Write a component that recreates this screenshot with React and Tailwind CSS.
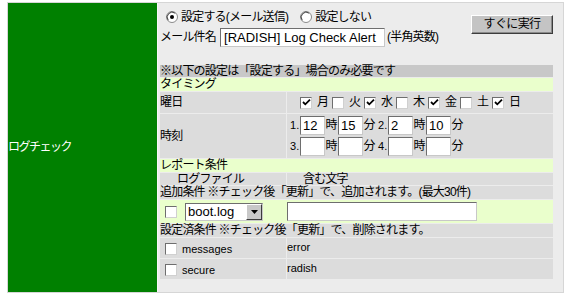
import React from "react";

const FONT = "font-[family-name:'Liberation_Sans','Noto_Sans_CJK_JP',sans-serif]";

function Radio({ on }) {
  return (
    <svg width="12" height="12" viewBox="0 0 12 12" className="shrink-0">
      <circle cx="6" cy="6" r="5.5" fill="#fff" stroke="#8a8a8a" />
      <path d="M2.2 9.2 A5 5 0 0 1 9.2 2.2" fill="none" stroke="#404040" strokeWidth="1" />
      {on && <circle cx="6" cy="6" r="2" fill="#000" />}
    </svg>
  );
}

function Check({ on }) {
  return (
    <span className="flex h-[12px] w-[12px] shrink-0 items-center justify-center border border-t-[#6e6e6e] border-l-[#6e6e6e] border-b-[#d0d0d0] border-r-[#d0d0d0] bg-white">
      {on && (
        <svg width="9" height="9" viewBox="0 0 9 9">
          <path d="M1 4 L3.3 6.3 L8 1.6" fill="none" stroke="#000" strokeWidth="1.8" />
        </svg>
      )}
    </span>
  );
}

function Box({ w, value }) {
  return (
    <span
      className={`flex h-[19px] ${w} shrink-0 items-center border border-t-[#6e6e6e] border-l-[#6e6e6e] border-b-[#c8c8c8] border-r-[#c8c8c8] bg-white pl-[2px] text-[13px]`}
    >
      {value}
    </span>
  );
}

function TimeSet({ n, h, m }) {
  return (
    <div className="flex items-center">
      <span className="w-[10px] text-[11px]">{n}.</span>
      <Box w="w-[25px]" value={h} />
      <span className="w-[13px] text-center">時</span>
      <Box w="w-[25px]" value={m} />
      <span className="w-[13px] text-center">分</span>
    </div>
  );
}

const days = [
  ["月", true],
  ["火", false],
  ["水", true],
  ["木", false],
  ["金", true],
  ["土", false],
  ["日", true],
];

export default function App() {
  return (
    <div className={`h-[294px] w-[565px] overflow-hidden bg-white pl-[7px] pt-[2px] text-[12px] leading-[13px] text-black ${FONT}`}>
      <div className="flex h-[291px] w-[557px] border border-[#d6d6d6]">
        {/* 左: 見出し */}
        <div className="flex w-[149px] items-center bg-[#008000] text-[12px] tracking-[-1.5px] text-white">
          ログチェック
        </div>

        {/* 右: 設定 */}
        <div className="flex-1 border-l border-[#f6f6f6] bg-[#ececec] pl-[2px] pr-[10px]">
          <div className="flex h-[47px] justify-between">
            <div className="flex flex-col">
              <div className="mt-[6px] flex h-[16px] items-center pl-[6px]">
                <Radio on />
                <span className="ml-[3px] tracking-[-0.8px]">設定する(メール送信)</span>
                <span className="ml-[12px]"><Radio /></span>
                <span className="ml-[3px] tracking-[-0.8px]">設定しない</span>
              </div>
              <div className="mt-[3px] flex h-[19px] items-center">
                <span className="tracking-[-0.8px]">メール件名</span>
                <span className="ml-[4px] flex h-[19px] w-[165px] items-center border border-t-[#6e6e6e] border-l-[#6e6e6e] border-b-[#c8c8c8] border-r-[#c8c8c8] bg-white pl-[3px] text-[13px]">
                  [RADISH] Log Check Alert
                </span>
                <span className="ml-[2px] tracking-[-0.8px]">(半角英数)</span>
              </div>
            </div>
            <button className="mt-[12px] flex h-[19px] w-[82px] items-center justify-center border border-t-white border-l-white border-b-[#3c3c3c] border-r-[#3c3c3c] bg-[#c4c4c4] text-[12px] tracking-[-0.6px] shadow-[inset_-1px_-1px_0_#8a8a8a]">
              すぐに実行
            </button>
          </div>

          <div className="mt-[15px] flex flex-col gap-[1px] tracking-[-0.8px]">
            <div className="h-[12px] bg-[#c8c8c8] leading-[12px]">※以下の設定は「設定する」場合のみ必要です</div>
            <div className="h-[13px] bg-[#eaffcc]">タイミング</div>

            <div className="flex h-[21px] gap-[1px]">
              <div className="flex w-[126px] items-center bg-[#dcdcdc]">曜日</div>
              <div className="flex flex-1 items-center bg-[#dcdcdc] pl-[13px]">
                {days.map(([d, on]) => (
                  <div key={d} className="flex w-[32px] items-center">
                    <Check on={on} />
                    <span className="ml-[5px]">{d}</span>
                  </div>
                ))}
              </div>
            </div>

            <div className="flex h-[44px] gap-[1px]">
              <div className="flex w-[126px] items-center bg-[#dcdcdc]">時刻</div>
              <div className="flex flex-1 flex-col justify-center gap-[2px] bg-[#dcdcdc] pl-[3px] tracking-normal">
                <div className="flex gap-[2px]">
                  <TimeSet n="1" h="12" m="15" />
                  <TimeSet n="2" h="2" m="10" />
                </div>
                <div className="flex gap-[2px]">
                  <TimeSet n="3" h="" m="" />
                  <TimeSet n="4" h="" m="" />
                </div>
              </div>
            </div>

            <div className="h-[13px] bg-[#eaffcc]">レポート条件</div>
            <div className="flex h-[12px] gap-[1px] leading-[12px]">
              <div className="w-[126px] bg-[#dcdcdc] pl-[17px]">ログファイル</div>
              <div className="flex-1 bg-[#dcdcdc] pl-[16px]">含む文字</div>
            </div>

            <div className="h-[13px] bg-[#dcdcdc]">追加条件 ※チェック後「更新」で、追加されます。(最大30件)</div>
            <div className="flex h-[23px] items-center bg-[#eaffcc] pl-[5px] tracking-normal">
              <Check />
              <span className="ml-[8px] flex h-[18px] w-[78px] items-center border border-t-[#6e6e6e] border-l-[#6e6e6e] border-b-[#c8c8c8] border-r-[#c8c8c8] bg-white text-[13px]">
                <span className="flex-1 pl-[2px]">boot.log</span>
                <span className="flex h-[16px] w-[16px] items-center justify-center border border-t-white border-l-white border-b-[#3c3c3c] border-r-[#3c3c3c] bg-[#c8c8c8]">
                  <svg width="7" height="4" viewBox="0 0 7 4">
                    <path d="M0 0 H7 L3.5 4 Z" fill="#000" />
                  </svg>
                </span>
              </span>
              <span className="ml-[24px] h-[19px] w-[190px] border border-t-[#6e6e6e] border-l-[#6e6e6e] border-b-[#c8c8c8] border-r-[#c8c8c8] bg-white" />
            </div>

            <div className="h-[13px] bg-[#dcdcdc]">設定済条件 ※チェック後「更新」で、削除されます。</div>
            {[
              ["messages", "error"],
              ["secure", "radish"],
            ].map(([f, w]) => (
              <div key={f} className="flex h-[20px] gap-[1px] tracking-normal">
                <div className="flex w-[126px] items-end bg-[#dcdcdc] pb-[3px] pl-[5px]">
                  <Check />
                  <span className="ml-[5px] text-[11px] leading-[11px]">{f}</span>
                </div>
                <div className="flex-1 bg-[#dcdcdc] pt-[4px] text-[11px] leading-[11px]">{w}</div>
              </div>
            ))}
          </div>
        </div>
      </div>
    </div>
  );
}
